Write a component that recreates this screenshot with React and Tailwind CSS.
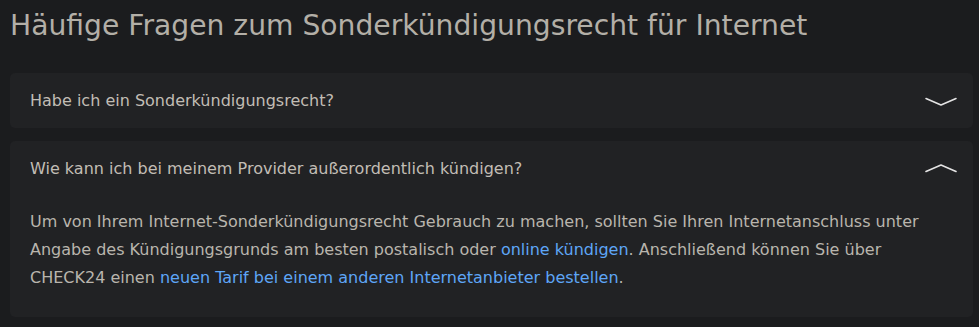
export default function App() {
    const font = { fontFamily: '"DejaVu Sans", Verdana, sans-serif' };

    return (
        <main className="min-h-screen w-full bg-[#1b1c1e] pl-[10px] pr-[6px] pt-[9px] pb-[10px]" style={font}>
            <h1 className="text-[28.2px] leading-[34px] text-[#b3afa7] font-normal">
                Häufige Fragen zum Sonderkündigungsrecht für Internet
            </h1>

            <div className="mt-[30px] flex flex-col gap-[13px]">
                <section className="rounded-[5px] bg-[#212224]">
                    <div className="flex items-center justify-between pl-[20px] pr-[16px] pt-[17px] pb-[16px]">
                        <span className="text-[16px] leading-[22px] text-[#c1bdb5]">Habe ich ein Sonderkündigungsrecht?</span>
                        <Chevron up={false} />
                    </div>
                </section>

                <section className="rounded-[5px] bg-[#212224]">
                    <div className="flex items-center justify-between pl-[20px] pr-[16px] pt-[17px]">
                        <span className="text-[16px] leading-[22px] text-[#c1bdb5]">
                            Wie kann ich bei meinem Provider außerordentlich kündigen?
                        </span>
                        <Chevron up={true} />
                    </div>
                    <p className="pl-[20px] pr-[30px] pt-[28px] pb-[25px] text-[16px] leading-[28px] text-[#b9b5ad]">
                        Um von Ihrem Internet-Sonderkündigungsrecht Gebrauch zu machen, sollten Sie Ihren Internetanschluss unter
                        Angabe des Kündigungsgrunds am besten postalisch oder{' '}
                        <a className="text-[#5ea6f7]">online kündigen</a>. Anschließend können Sie über CHECK24 einen{' '}
                        <a className="text-[#5ea6f7]">neuen Tarif bei einem anderen Internetanbieter bestellen</a>.
                    </p>
                </section>
            </div>
        </main>
    );
}

function Chevron({ up }) {
    return (
        <svg width="32" height="10" viewBox="0 0 32 10" className="shrink-0">
            <path
                d={up ? 'M1 7.5 L16 1 L31 7.5' : 'M1 2.5 L16 9 L31 2.5'}
                fill="none"
                stroke="#e4e4e4"
                strokeWidth="1.6"
                strokeLinecap="round"
                strokeLinejoin="round"
            />
        </svg>
    );
}
